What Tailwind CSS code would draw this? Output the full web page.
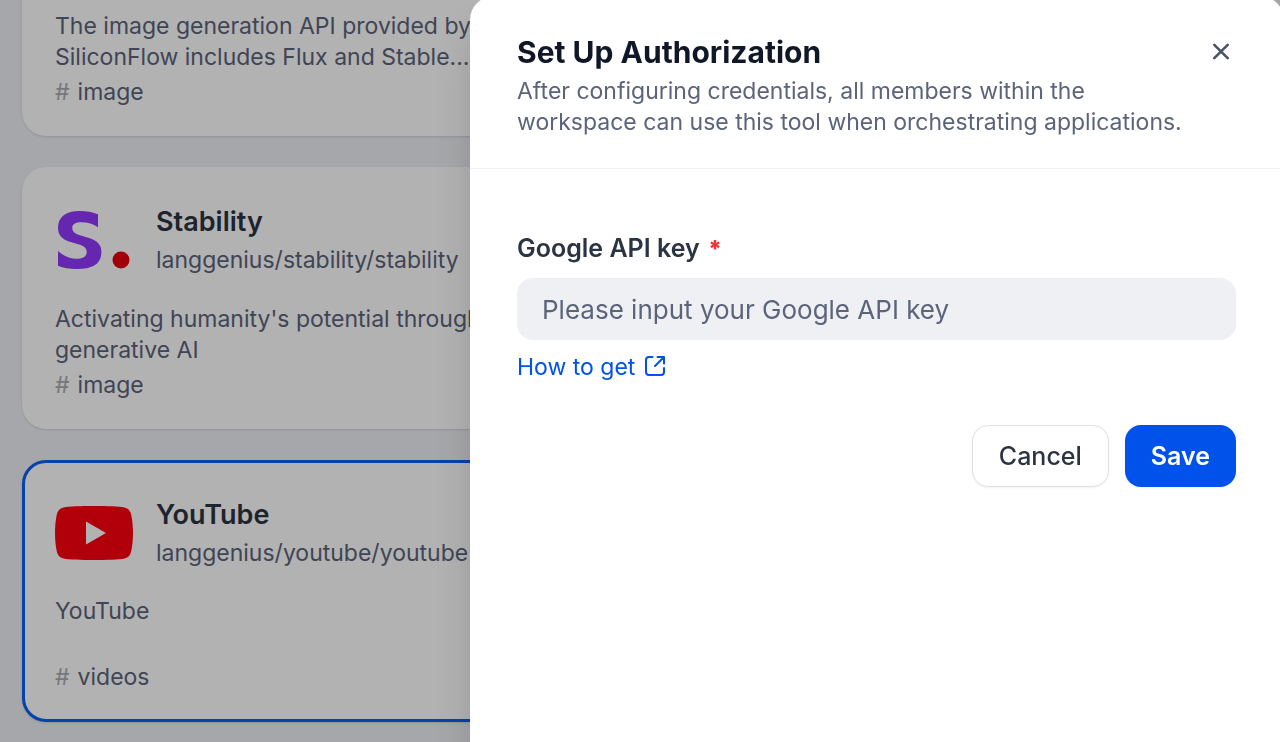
<!DOCTYPE html>
<html lang="en">
<head>
<meta charset="utf-8">
<meta name="viewport" content="width=device-width, initial-scale=1">
<title>Set Up Authorization</title>
<script src="https://cdn.jsdelivr.net/npm/@tailwindcss/browser@4"></script>
</head>
<body class="h-screen overflow-hidden bg-[#eef0f4] font-[Inter,sans-serif] text-[23px] leading-[31px] text-[#5b647a]">

<!-- Tool list -->
<main class="flex h-screen flex-col justify-end gap-[31px] overflow-hidden pb-5 pl-[22px]">
  <article class="flex h-[262px] w-2/5 shrink-0 flex-col rounded-3xl bg-white px-[33px] pt-[34px] pb-[29px] shadow-sm">
    <div class="h-20 shrink-0"></div>
    <p class="mt-[23px] h-[62px]">The image generation API provided by SiliconFlow includes Flux and Stable...</p>
    <p class="mt-1 flex gap-2"><span class="text-[#a8abb2]">#</span><span>image</span></p>
  </article>

  <article class="flex h-[262px] w-2/5 shrink-0 flex-col rounded-3xl bg-white px-[33px] pt-[34px] pb-[29px] shadow-sm">
    <div class="flex h-20 shrink-0 items-center gap-[23px]">
      <svg class="size-[78px] shrink-0" viewBox="0 0 78 78" aria-hidden="true">
        <path fill="#9138fb" d="M43 12.300V25.300C38 22 33 20.300 26.500 20.300C20.500 20.300 17.300 22.300 17.300 25.700C17.300 30 20 31.700 25 33.200L34 36C42 38.500 46.400 42.500 46.400 50C46.400 62 37.500 67 22 67C14.500 67 8 65.800 3 63.700V49C8.500 54 14.500 56.800 21.500 56.800C28 56.800 31.700 54.500 31.700 50C31.700 46 29 44 24 42.500L15.500 40C7 37.500 3 33 3 25.700C3 15 11 9 24.500 9C31.500 9 38 10.200 43 12.300Z"/>
        <circle cx="66" cy="58" r="8.500" fill="#e8000c"/>
      </svg>
      <div class="flex flex-col gap-0.5">
        <h2 class="text-[27px] leading-[36px] font-semibold text-[#2b3442]">Stability</h2>
        <p class="leading-[36px] whitespace-nowrap">langgenius/stability/stability</p>
      </div>
    </div>
    <p class="mt-[23px] h-[62px]">Activating humanity's potential through generative AI</p>
    <p class="mt-1 flex gap-2"><span class="text-[#a8abb2]">#</span><span>image</span></p>
  </article>

  <article class="flex h-[262px] w-2/5 shrink-0 flex-col rounded-3xl border-3 border-[#0660f6] bg-white px-[30px] pt-[31px] pb-[26px] shadow-sm">
    <div class="flex h-20 shrink-0 items-center gap-[23px]">
      <svg class="size-[78px] shrink-0" viewBox="0 0 78 78" aria-hidden="true">
        <path fill="#ff0010" d="M39 11C52 11 64 11.400 69.500 12.500C73.500 13.500 75.500 16 76.300 20C77.500 26 78 32 78 38C78 44 77.500 50 76.300 56C75.500 60 73.500 62.500 69.500 63.500C64 64.600 52 65 39 65C26 65 14 64.600 8.500 63.500C4.500 62.500 2.500 60 1.700 56C0.500 50 0 44 0 38C0 32 0.500 26 1.700 20C2.500 16 4.500 13.500 8.500 12.500C14 11.400 26 11 39 11Z"/>
        <path fill="#fff" d="M31 26.500L51 38L31 49.500Z"/>
      </svg>
      <div class="flex flex-col gap-0.5">
        <h2 class="text-[27px] leading-[36px] font-semibold text-[#2b3442]">YouTube</h2>
        <p class="leading-[36px] whitespace-nowrap">langgenius/youtube/youtube</p>
      </div>
    </div>
    <p class="mt-[22px] h-[62px]">YouTube</p>
    <p class="mt-1 flex gap-2"><span class="text-[#a8abb2]">#</span><span>videos</span></p>
  </article>
</main>

<div class="fixed inset-0 bg-black/30"></div>

<!-- Authorization drawer -->
<section role="dialog" aria-labelledby="drawer-title" class="fixed -top-1 -right-1 -bottom-8 w-[814px] rounded-3xl bg-white shadow-2xl">
  <header class="border-b border-[#f0f1f4] pt-[34px] pr-[47px] pb-[30px] pl-[47px]">
    <div class="flex items-center justify-between">
      <h1 id="drawer-title" class="text-[30px] leading-[44px] font-bold text-[#101828]">Set Up Authorization</h1>
      <button type="button" aria-label="Close" class="flex size-8 items-center justify-center text-[#495464]">
        <svg class="size-[18px]" viewBox="0 0 18 18" fill="none" stroke="currentColor" stroke-width="2.600" stroke-linecap="round" aria-hidden="true"><path d="M2.300 1.800L15.700 15.200M15.700 1.800L2.300 15.200"/></svg>
      </button>
    </div>
    <p class="mt-0.5 pr-10">After configuring credentials, all members within the workspace can use this tool when orchestrating applications.</p>
  </header>
  <form class="flex flex-col pt-[61px] pr-12 pl-[47px]">
    <label for="api-key" class="text-[25px] leading-[36px] font-semibold text-[#2b3442]">Google API key <span class="ml-0.5 text-[23px] leading-none font-black text-[#f03538]">*</span></label>
    <input id="api-key" type="text" placeholder="Please input your Google API key" class="mt-3 h-[62px] w-full rounded-2xl bg-[#eff0f4] px-[25px] text-[26px] placeholder:text-[#5b647a] outline-none">
    <a href="#" class="mt-3 flex items-center gap-[9px] self-start text-[#0052eb]">How to get
      <svg class="mb-1 size-[22px]" viewBox="0 0 22 22" fill="none" stroke="currentColor" stroke-width="2" stroke-linecap="round" stroke-linejoin="round" aria-hidden="true"><path d="M8.500 2H5Q2 2 2 5V17Q2 20 5 20H17Q20 20 20 17V13M13.500 2H20V8.500M20 2L11 11"/></svg>
    </a>
    <div class="mt-[42px] flex justify-end gap-4">
      <button type="button" class="h-[62px] rounded-2xl border border-[#dfe1e5] bg-white px-[26px] text-[25px] font-medium text-[#2b3442] shadow-xs">Cancel</button>
      <button type="button" class="h-[62px] rounded-2xl bg-[#0052eb] px-[26px] text-[25px] font-semibold text-white shadow-xs">Save</button>
    </div>
  </form>
</section>
</body>
</html>
